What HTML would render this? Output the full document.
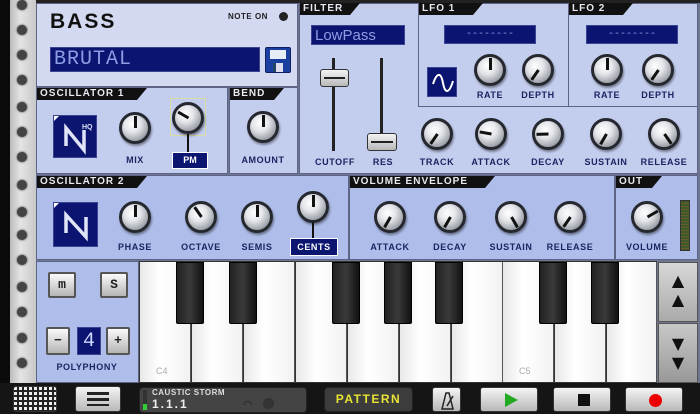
<!DOCTYPE html><html><head><style>
*{margin:0;padding:0;box-sizing:border-box}
body{width:700px;height:414px;overflow:hidden;background:#6f7690;position:relative;font-family:"Liberation Sans",sans-serif}
.a{position:absolute}
.p{position:absolute;background:#c3cdee;border:1px solid #5d6485}
.p2{background:#aebde9}
.h{position:absolute;height:12px;background:#111;color:#e8e8f0;font:bold 10px "Liberation Sans",sans-serif;letter-spacing:1px;padding:0 0 0 3px;line-height:12px;clip-path:polygon(0 0,100% 0,calc(100% - 10px) 100%,0 100%)}
.l{position:absolute;font:bold 9px "Liberation Sans",sans-serif;color:#1c2460;letter-spacing:.6px;transform:translateX(-50%);white-space:nowrap}
.k{position:absolute;width:32px;height:32px;margin:-16px 0 0 -16px;border-radius:50%;background:radial-gradient(circle at 40% 35%,#fff 0,#e4e6ea 35%,#9a9ea6 75%,#6a6e76 100%);border:3px solid #262830;box-shadow:1px 2px 2px rgba(0,0,0,.4)}
.k i{position:absolute;left:12px;top:1px;width:3px;height:12px;background:#111;transform-origin:50% 12px;transform:rotate(var(--r))}
.lcd{position:absolute;background:#0b1470;border:1px solid #3a4490;color:#8d9ee6}
.wk{position:absolute;top:262px;height:120px;width:51px;background:linear-gradient(90deg,#e8e8e8,#fff 40%,#f2f2f2);border-right:1px solid #555}
.bk{position:absolute;top:262px;height:62px;width:28px;background:linear-gradient(90deg,#222,#3a3a3a 50%,#111);border:1px solid #000;border-radius:0 0 2px 2px}
.btn{position:absolute;background:linear-gradient(#f4f4f4,#b8b8b8);border:1px solid #333;border-radius:3px}
.sq{position:absolute;background:linear-gradient(#fafafa,#b5b5b5);border:2px solid #555;border-radius:2px;font:bold 13px "Liberation Mono",monospace;text-align:center;color:#222}
.dot{position:absolute;left:17px;width:10px;height:10px;border-radius:50%;background:#444;box-shadow:0 0 2px #222}
</style></head><body>
<!-- rail -->
<div class="a" style="left:0;top:0;width:10px;height:414px;background:#0a0a0a"></div>
<div class="a" style="left:10px;top:0;width:26px;height:384px;background:linear-gradient(90deg,#bbb,#e4e4e4 40%,#c8c8c8)"></div>
<div class="dot" style="top:0"></div><div class="dot" style="top:25px"></div><div class="dot" style="top:50px"></div><div class="dot" style="top:75px"></div><div class="dot" style="top:102px"></div><div class="dot" style="top:127px"></div><div class="dot" style="top:152px"></div><div class="dot" style="top:180px"></div><div class="dot" style="top:207px"></div><div class="dot" style="top:230px"></div><div class="dot" style="top:255px"></div><div class="dot" style="top:282px"></div><div class="dot" style="top:307px"></div><div class="dot" style="top:333px"></div><div class="dot" style="top:358px"></div>
<div class="a" style="left:36px;top:0;width:664px;height:3px;background:#222"></div>

<!-- BASS -->
<div class="p" style="left:36px;top:3px;width:262px;height:84px;background:#d2d9f1"></div>
<div class="a" style="left:50px;top:10px;font:bold 21px 'Liberation Sans',sans-serif;color:#111;letter-spacing:2px">BASS</div>
<div class="a" style="left:228px;top:12px;font:bold 8px 'Liberation Sans',sans-serif;color:#222;letter-spacing:.5px">NOTE ON</div>
<div class="a" style="left:279px;top:12px;width:9px;height:9px;border-radius:50%;background:#222"></div>
<div class="lcd" style="left:50px;top:47px;width:210px;height:25px;font:20px 'Liberation Mono',monospace;line-height:24px;padding-left:3px;letter-spacing:1px">BRUTAL</div>
<div class="a" style="left:265px;top:47px;width:26px;height:26px;background:#1b3fa0;border-radius:2px;border:1px solid #0c1f60"><div class="a" style="left:4px;top:2px;width:16px;height:9px;background:#e8eef8"></div><div class="a" style="left:7px;top:15px;width:10px;height:9px;background:#dde;border-left:3px solid #246"></div></div>

<!-- OSC1 -->
<div class="p" style="left:36px;top:87px;width:192px;height:87px"></div>
<div class="h" style="left:37px;top:88px;width:110px">OSCILLATOR 1</div>
<div class="lcd" style="left:53px;top:115px;width:44px;height:43px;background:#0c1670"><svg width="44" height="43" class="a" style="left:0;top:0"><path d="M12 30 V12 L30 34 V14" stroke="#e0e4f8" stroke-width="3.5" fill="none"/><text x="28" y="13" font-size="7" font-weight="bold" fill="#e0e4f8" font-family="Liberation Sans">HQ</text><path d="M0 0h5l-5 5z" fill="#fff"/></svg></div>
<div class="k" style="left:135px;top:128px;--r:0deg"><i></i></div><div class="l" style="left:135px;top:155px">MIX</div>
<div class="a" style="left:170px;top:98px;width:36px;height:38px;border:1px solid #d9dca0"></div>
<div class="k" style="left:188px;top:118px;--r:-60deg"><i></i></div>
<div class="a" style="left:187px;top:134px;width:2px;height:18px;background:#111"></div>
<div class="a" style="left:172px;top:152px;width:36px;height:17px;background:#0c1670;border:1px solid #fff;color:#fff;font:bold 9px 'Liberation Sans';text-align:center;line-height:15px">PM</div>
<!-- BEND -->
<div class="p" style="left:229px;top:87px;width:69px;height:87px"></div>
<div class="h" style="left:230px;top:88px;width:54px">BEND</div>
<div class="k" style="left:263px;top:127px;--r:0deg"><i></i></div><div class="l" style="left:263px;top:155px">AMOUNT</div>

<!-- FILTER -->
<div class="p" style="left:299px;top:3px;width:399px;height:171px"></div>
<div class="h" style="left:300px;top:3px;width:60px">FILTER</div>
<div class="lcd" style="left:311px;top:25px;width:94px;height:20px;font:15px 'Liberation Sans',sans-serif;line-height:19px;padding-left:3px">LowPass</div>
<div class="a" style="left:332px;top:58px;width:3px;height:93px;background:#222"></div>
<div class="a" style="left:380px;top:58px;width:3px;height:93px;background:#222"></div>
<div class="btn" style="left:320px;top:69px;width:29px;height:18px"><div class="a" style="left:3px;top:7px;width:21px;height:2px;background:#222"></div></div>
<div class="btn" style="left:367px;top:133px;width:30px;height:18px"><div class="a" style="left:3px;top:7px;width:22px;height:2px;background:#222"></div></div>
<div class="l" style="left:335px;top:157px">CUTOFF</div><div class="l" style="left:383px;top:157px">RES</div>
<!-- LFO -->
<div class="p" style="left:418px;top:3px;width:151px;height:104px"></div>
<div class="h" style="left:419px;top:3px;width:64px">LFO 1</div>
<div class="lcd" style="left:444px;top:25px;width:92px;height:19px;text-align:center;font:10px 'Liberation Mono';line-height:17px">--------</div>
<div class="lcd" style="left:427px;top:67px;width:30px;height:30px"><svg width="30" height="30" class="a" style="left:0;top:0"><path d="M5 16 C9 4 13 4 15 15 S21 26 25 13" stroke="#fff" stroke-width="2" fill="none"/></svg></div>
<div class="k" style="left:490px;top:70px;--r:0deg"><i></i></div><div class="l" style="left:490px;top:90px">RATE</div>
<div class="k" style="left:538px;top:70px;--r:-145deg"><i></i></div><div class="l" style="left:538px;top:90px">DEPTH</div>
<div class="p" style="left:568px;top:3px;width:130px;height:104px"></div>
<div class="h" style="left:569px;top:3px;width:64px">LFO 2</div>
<div class="lcd" style="left:586px;top:25px;width:92px;height:19px;text-align:center;font:10px 'Liberation Mono';line-height:17px">--------</div>
<div class="k" style="left:607px;top:70px;--r:0deg"><i></i></div><div class="l" style="left:607px;top:90px">RATE</div>
<div class="k" style="left:658px;top:70px;--r:-145deg"><i></i></div><div class="l" style="left:658px;top:90px">DEPTH</div>
<div class="k" style="left:437px;top:134px;--r:-145deg"><i></i></div><div class="l" style="left:437px;top:157px">TRACK</div>
<div class="k" style="left:491px;top:134px;--r:-80deg"><i></i></div><div class="l" style="left:491px;top:157px">ATTACK</div>
<div class="k" style="left:548px;top:134px;--r:-92deg"><i></i></div><div class="l" style="left:548px;top:157px">DECAY</div>
<div class="k" style="left:606px;top:134px;--r:-150deg"><i></i></div><div class="l" style="left:606px;top:157px">SUSTAIN</div>
<div class="k" style="left:664px;top:134px;--r:145deg"><i></i></div><div class="l" style="left:664px;top:157px">RELEASE</div>

<!-- OSC2 -->
<div class="p p2" style="left:36px;top:175px;width:313px;height:85px"></div>
<div class="h" style="left:37px;top:176px;width:110px">OSCILLATOR 2</div>
<div class="lcd" style="left:53px;top:202px;width:45px;height:45px"><svg width="45" height="45" class="a" style="left:0;top:0"><path d="M12 30 V12 L32 34 V14" stroke="#e0e4f8" stroke-width="3.5" fill="none"/><path d="M0 0h5l-5 5z" fill="#fff"/></svg></div>
<div class="k" style="left:135px;top:217px;--r:0deg"><i></i></div><div class="l" style="left:135px;top:242px">PHASE</div>
<div class="k" style="left:201px;top:217px;--r:-35deg"><i></i></div><div class="l" style="left:201px;top:242px">OCTAVE</div>
<div class="k" style="left:257px;top:217px;--r:0deg"><i></i></div><div class="l" style="left:257px;top:242px">SEMIS</div>
<div class="k" style="left:313px;top:207px;--r:0deg"><i></i></div>
<div class="a" style="left:312px;top:222px;width:2px;height:16px;background:#111"></div>
<div class="a" style="left:290px;top:238px;width:48px;height:18px;background:#0c1670;border:1px solid #fff;color:#fff;font:bold 9px 'Liberation Sans';letter-spacing:.6px;text-align:center;line-height:16px">CENTS</div>
<!-- VOL ENV -->
<div class="p p2" style="left:349px;top:175px;width:266px;height:85px"></div>
<div class="h" style="left:350px;top:176px;width:145px">VOLUME ENVELOPE</div>
<div class="k" style="left:390px;top:217px;--r:-150deg"><i></i></div><div class="l" style="left:390px;top:242px">ATTACK</div>
<div class="k" style="left:450px;top:217px;--r:-150deg"><i></i></div><div class="l" style="left:450px;top:242px">DECAY</div>
<div class="k" style="left:511px;top:217px;--r:150deg"><i></i></div><div class="l" style="left:511px;top:242px">SUSTAIN</div>
<div class="k" style="left:570px;top:217px;--r:-145deg"><i></i></div><div class="l" style="left:570px;top:242px">RELEASE</div>
<!-- OUT -->
<div class="p p2" style="left:615px;top:175px;width:83px;height:85px"></div>
<div class="h" style="left:616px;top:176px;width:46px">OUT</div>
<div class="k" style="left:647px;top:217px;--r:60deg"><i></i></div><div class="l" style="left:647px;top:242px">VOLUME</div>
<div class="a" style="left:680px;top:200px;width:10px;height:51px;background:repeating-linear-gradient(#3c5a2a 0 2px,#6a5a2a 2px 3px);border:1px solid #333"></div>

<!-- POLY -->
<div class="p p2" style="left:36px;top:261px;width:103px;height:122px"></div>
<div class="sq" style="left:48px;top:272px;width:28px;height:26px;line-height:22px">m</div>
<div class="sq" style="left:100px;top:272px;width:28px;height:26px;line-height:22px">S</div>
<div class="sq" style="left:46px;top:327px;width:24px;height:28px;line-height:24px">−</div>
<div class="lcd" style="left:77px;top:327px;width:24px;height:28px;color:#cfd8ff;font:20px 'Liberation Mono';text-align:center;line-height:27px">4</div>
<div class="sq" style="left:106px;top:327px;width:24px;height:28px;line-height:24px">+</div>
<div class="l" style="left:87px;top:362px">POLYPHONY</div>

<!-- KEYBOARD -->
<div class="a" style="left:139px;top:261px;width:518px;height:122px;background:#333"></div>
<div class="wk" style="left:140px"></div><div class="wk" style="left:192px"></div><div class="wk" style="left:244px"></div><div class="wk" style="left:296px"></div><div class="wk" style="left:348px"></div><div class="wk" style="left:400px"></div><div class="wk" style="left:452px"></div><div class="wk" style="left:503px"></div><div class="wk" style="left:555px"></div><div class="wk" style="left:607px;width:50px"></div>
<div class="a" style="left:156px;top:366px;font:9px 'Liberation Sans';color:#aaa">C4</div>
<div class="a" style="left:519px;top:366px;font:9px 'Liberation Sans';color:#aaa">C5</div>
<div class="bk" style="left:176px"></div><div class="bk" style="left:229px"></div><div class="bk" style="left:332px"></div><div class="bk" style="left:384px"></div><div class="bk" style="left:435px"></div><div class="bk" style="left:539px"></div><div class="bk" style="left:591px"></div>
<div class="a" style="left:658px;top:262px;width:40px;height:60px;background:linear-gradient(#d8d8d8,#aaa);border:1px solid #555;color:#111;font:16px 'DejaVu Sans';text-align:center;line-height:19px;padding-top:8px">▲<br>▲</div>
<div class="a" style="left:658px;top:323px;width:40px;height:60px;background:linear-gradient(#c8c8c8,#999);border:1px solid #555;color:#111;font:16px 'DejaVu Sans';text-align:center;line-height:19px;padding-top:10px">▼<br>▼</div>

<!-- BOTTOM -->
<div class="a" style="left:0;top:383px;width:700px;height:31px;background:#151515"></div>
<div class="btn" style="left:13px;top:386px;width:44px;height:26px;background:repeating-linear-gradient(90deg,#eee 0 3px,#222 3px 5px)"><div class="a" style="left:0;top:0;width:42px;height:24px;background:repeating-linear-gradient(#0000 0 3px,#222 3px 5px)"></div></div>
<div class="btn" style="left:75px;top:386px;width:46px;height:26px"><div class="a" style="left:11px;top:5px;width:22px;height:14px;background:repeating-linear-gradient(#222 0 3px,#0000 3px 6px)"></div></div>
<div class="a" style="left:139px;top:387px;width:168px;height:26px;background:#444;border-radius:4px;border:1px solid #222"></div>
<div class="a" style="left:143px;top:390px;width:4px;height:20px;background:linear-gradient(#333 70%,#3c3 70%)"></div>
<div class="a" style="left:152px;top:388px;font:bold 8px 'Liberation Sans';color:#ddd;letter-spacing:.5px">CAUSTIC STORM</div>
<div class="a" style="left:152px;top:397px;font:bold 12px 'Liberation Sans';color:#eee;letter-spacing:2px">1.1.1</div>
<div class="a" style="left:243px;top:398px;font:11px 'DejaVu Sans';color:#222">◠</div>
<div class="a" style="left:263px;top:398px;width:11px;height:11px;border-radius:50%;background:#333"></div>
<div class="a" style="left:324px;top:387px;width:89px;height:25px;background:#3c3c3c;border:1px solid #222;border-radius:4px;color:#e7e233;font:bold 12px 'Liberation Sans';letter-spacing:1.5px;text-align:center;line-height:23px">PATTERN</div>
<div class="btn" style="left:432px;top:387px;width:29px;height:25px"><svg width="29" height="25" class="a" style="left:0;top:0"><path d="M9 21 L13 5 H16 L20 21 Z" fill="none" stroke="#222" stroke-width="1.5"/><path d="M14 18 L20 8" stroke="#222" stroke-width="1.5"/></svg></div>
<div class="btn" style="left:480px;top:387px;width:58px;height:25px"><div class="a" style="left:24px;top:5px;border-left:13px solid #2a2;border-top:7px solid transparent;border-bottom:7px solid transparent"></div></div>
<div class="btn" style="left:553px;top:387px;width:58px;height:25px"><div class="a" style="left:24px;top:6px;width:12px;height:12px;background:#111"></div></div>
<div class="btn" style="left:625px;top:387px;width:58px;height:25px"><div class="a" style="left:23px;top:6px;width:13px;height:13px;border-radius:50%;background:#e00"></div></div>
</body></html>
